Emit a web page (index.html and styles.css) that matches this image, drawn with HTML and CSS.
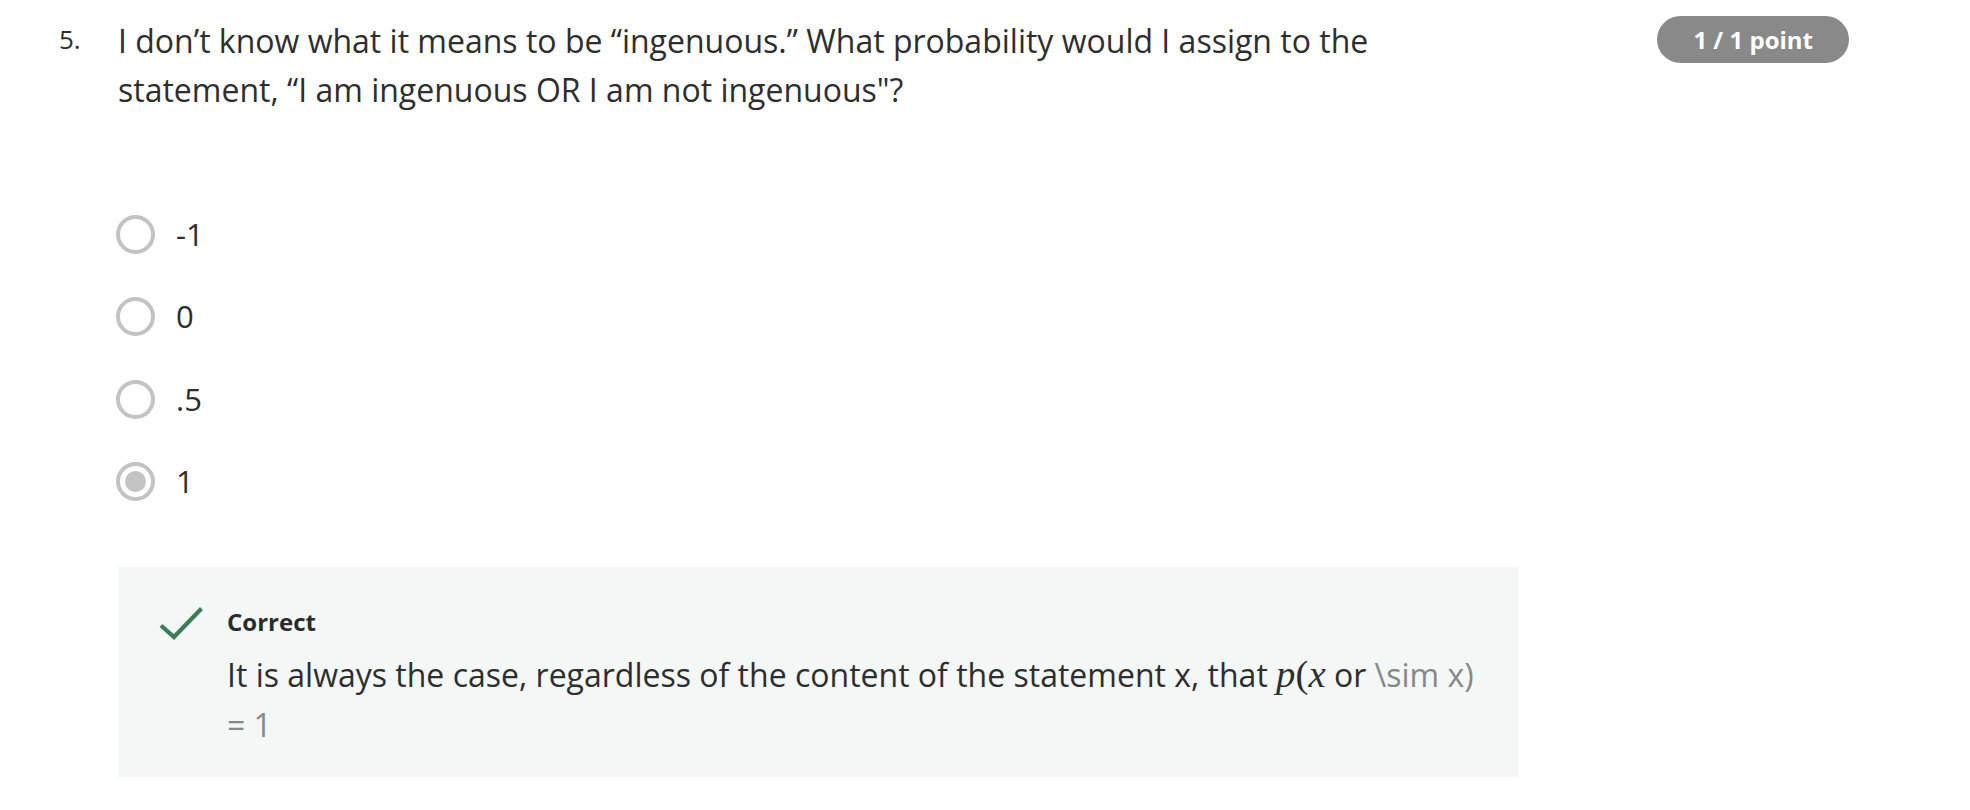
FILE: index.html
```html
<!DOCTYPE html>
<html lang="en">
<head>
<meta charset="utf-8">
<title>Question 5</title>
<link rel="stylesheet" href="styles.css">
</head>
<body>
<div class="question">
  <div class="q-head">
    <div class="q-num">5.</div>
    <div class="q-text">I don’t know what it means to be “ingenuous.” What probability would I assign to the statement, “I am ingenuous OR I am not ingenuous"?</div>
    <div class="q-points">1 / 1 point</div>
  </div>
  <div class="options">
    <label class="option"><span class="radio"></span><span class="opt-label">-1</span></label>
    <label class="option"><span class="radio"></span><span class="opt-label">0</span></label>
    <label class="option"><span class="radio"></span><span class="opt-label">.5</span></label>
    <label class="option"><span class="radio checked"></span><span class="opt-label">1</span></label>
  </div>
  <div class="feedback">
    <svg class="check" width="44" height="34" viewBox="0 0 44 34" aria-hidden="true">
      <polyline points="2,19.5 15,31 42.5,2.5" fill="none" stroke="#3b7d57" stroke-width="4.2"/>
    </svg>
    <div class="fb-body">
      <div class="fb-title">Correct</div>
      <div class="fb-text">It is always the case, regardless of the content of the statement x, that <span class="math"><i>p</i>(<i>x</i></span> or <span class="raw">\sim x)</span> <span class="raw">= 1</span></div>
    </div>
  </div>
</div>
</body>
</html>
```

FILE: styles.css
```css
html, body {
  margin: 0;
  padding: 0;
  background: #ffffff;
}
body {
  font-family: "Open Sans", "Noto Sans", sans-serif;
  color: #2e2e2e;
}
.question {
  padding: 16px 121px 0 59px;
}
.q-head {
  display: flex;
  align-items: flex-start;
}
.q-num {
  width: 59px;
  flex: none;
  font-size: 26px;
  line-height: 47px;
}
.q-text {
  width: 1320px;
  flex: none;
  font-size: 32px;
  line-height: 49px;
}
.q-points {
  margin-left: auto;
  flex: none;
  background: #898989;
  color: #ffffff;
  font-weight: 700;
  font-size: 24px;
  line-height: 47px;
  height: 47px;
  padding: 0 36px;
  border-radius: 24px;
  white-space: nowrap;
}
.options {
  margin-top: 79px;
  padding-left: 57px;
  display: flex;
  flex-direction: column;
}
.option {
  display: flex;
  align-items: center;
  height: 82.5px;
}
.radio {
  box-sizing: border-box;
  width: 39px;
  height: 39px;
  border: 4px solid #c3c3c3;
  border-radius: 50%;
  display: flex;
  align-items: center;
  justify-content: center;
  flex: none;
}
.radio.checked::after {
  content: "";
  width: 21px;
  height: 21px;
  border-radius: 50%;
  background: #c3c3c3;
}
.opt-label {
  margin-left: 21px;
  font-size: 31px;
  line-height: 49px;
}
.feedback {
  margin: 44px 0 0 59px;
  width: 1400px;
  box-sizing: border-box;
  background: #f3f8f6;
  display: flex;
  align-items: flex-start;
  padding: 37px 20px 27px 41px;
}
.check {
  flex: none;
  margin-top: 2px;
}
.fb-body {
  margin-left: 24px;
  flex: 1;
}
.fb-title {
  font-weight: 700;
  font-size: 24px;
  line-height: 36px;
  color: #2b2b2b;
}
.fb-text {
  margin-top: 10px;
  font-size: 32px;
  line-height: 50px;
}
.math {
  font-family: "Liberation Serif", "DejaVu Serif", serif;
  font-size: 1.21em;
  line-height: 40px;
}
.raw {
  color: #888888;
}
```
